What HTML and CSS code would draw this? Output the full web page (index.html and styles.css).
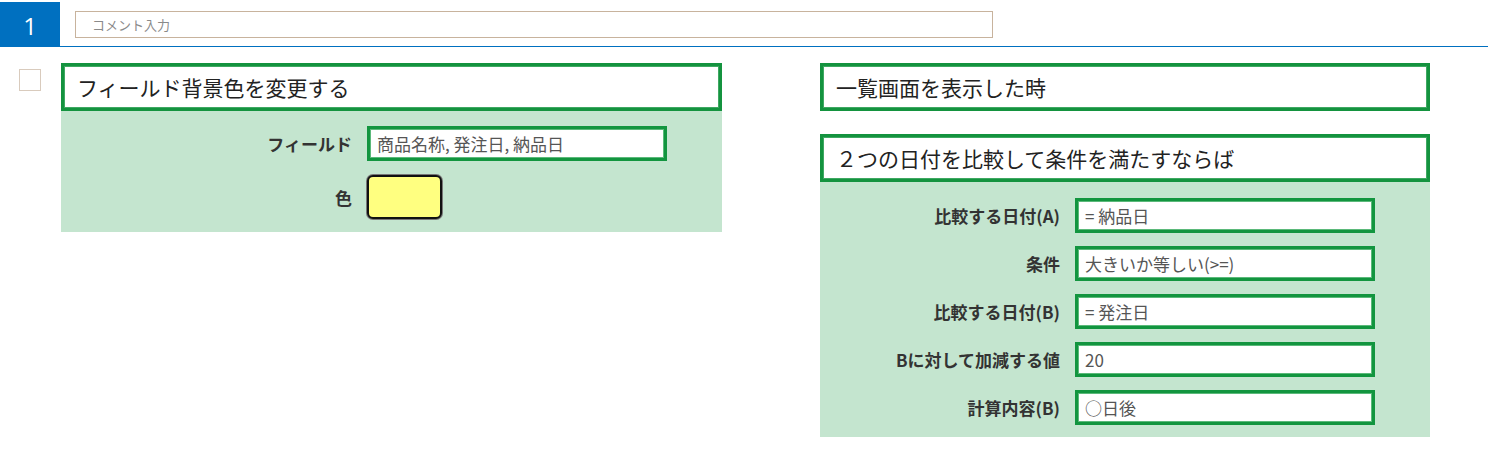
FILE: index.html
```html
<!DOCTYPE html>
<html lang="ja">
<head>
<meta charset="utf-8">
<link rel="stylesheet" href="styles.css">
</head>
<body>
<div class="topbar">
  <div class="num">1</div>
  <div class="comment">コメント入力</div>
</div>
<div class="main">
  <div class="check"></div>
  <div class="card left">
    <div class="title">フィールド背景色を変更する</div>
    <div class="body">
      <div class="row">
        <div class="label">フィールド</div>
        <div class="field">商品名称, 発注日, 納品日</div>
      </div>
      <div class="row">
        <div class="label">色</div>
        <div class="swatch"></div>
      </div>
    </div>
  </div>
  <div class="rightcol">
    <div class="card">
      <div class="title">一覧画面を表示した時</div>
    </div>
    <div class="card right">
      <div class="title">２つの日付を比較して条件を満たすならば</div>
      <div class="body">
        <div class="row"><div class="label">比較する日付(A)</div><div class="field">= 納品日</div></div>
        <div class="row"><div class="label">条件</div><div class="field">大きいか等しい(&gt;=)</div></div>
        <div class="row"><div class="label">比較する日付(B)</div><div class="field">= 発注日</div></div>
        <div class="row"><div class="label">Bに対して加減する値</div><div class="field">20</div></div>
        <div class="row"><div class="label">計算内容(B)</div><div class="field">○日後</div></div>
      </div>
    </div>
  </div>
</div>
</body>
</html>
```
FILE: styles.css
```css
* { box-sizing: border-box; }
body {
  margin: 0;
  background: #fff;
  font-family: "Noto Sans CJK JP", "Noto Sans", sans-serif;
  color: #222;
}
.topbar {
  margin-top: 2px;
  height: 45px;
  display: flex;
  align-items: flex-start;
  border-bottom: 1px solid #0070c0;
}
.num {
  width: 60px;
  height: 44px;
  background: #0070c0;
  color: #fff;
  font-family: "Open Sans", "Noto Sans", sans-serif;
  font-size: 24px;
  display: flex;
  align-items: center;
  justify-content: center;
  padding-top: 2px;
}
.comment {
  margin-left: 15px;
  margin-top: 9px;
  width: 918px;
  height: 27px;
  border: 1px solid #c8b39d;
  font-size: 13px;
  color: #8a8a8a;
  padding-left: 16px;
  display: flex;
  align-items: center;
}
.main {
  display: flex;
  align-items: flex-start;
  padding-top: 16px;
}
.check {
  width: 22px;
  height: 22px;
  margin-left: 19px;
  margin-top: 6px;
  border: 1px solid #d9cbbd;
  flex: none;
}
.card { width: 610px; }
.card.left { width: 661px; margin-left: 20px; }
.rightcol {
  margin-left: 98px;
  display: flex;
  flex-direction: column;
  gap: 23px;
}
.title {
  height: 48px;
  border: 3px solid #14933f;
  box-shadow: inset 0 0 0 1px #3fa862;
  background: #fff;
  font-size: 21px;
  color: #222;
  padding-left: 13px;
  display: flex;
  align-items: center;
}
.body {
  background: #c4e5cf;
  display: flex;
  flex-direction: column;
}
.left .body { padding: 15px 0 13px; gap: 14px; }
.right .body { padding: 16px 0 12px; gap: 13px; }
.row {
  display: flex;
  align-items: center;
  gap: 15px;
}
.label {
  text-align: right;
  font-weight: bold;
  font-size: 17px;
  color: #333;
}
.left .label { width: 291px; }
.right .label { width: 240px; }
.field {
  width: 300px;
  height: 35px;
  background: #fff;
  border: 3px solid #12953f;
  box-shadow: inset 0 0 0 1px #5bb97a;
  font-size: 17px;
  color: #555;
  padding-left: 7px;
  display: flex;
  align-items: center;
}
.swatch {
  width: 75px;
  height: 44px;
  background: #ffff80;
  border: 2px solid #111;
  border-radius: 6px;
  box-shadow: 0 0 0 1px #777;
}
```
